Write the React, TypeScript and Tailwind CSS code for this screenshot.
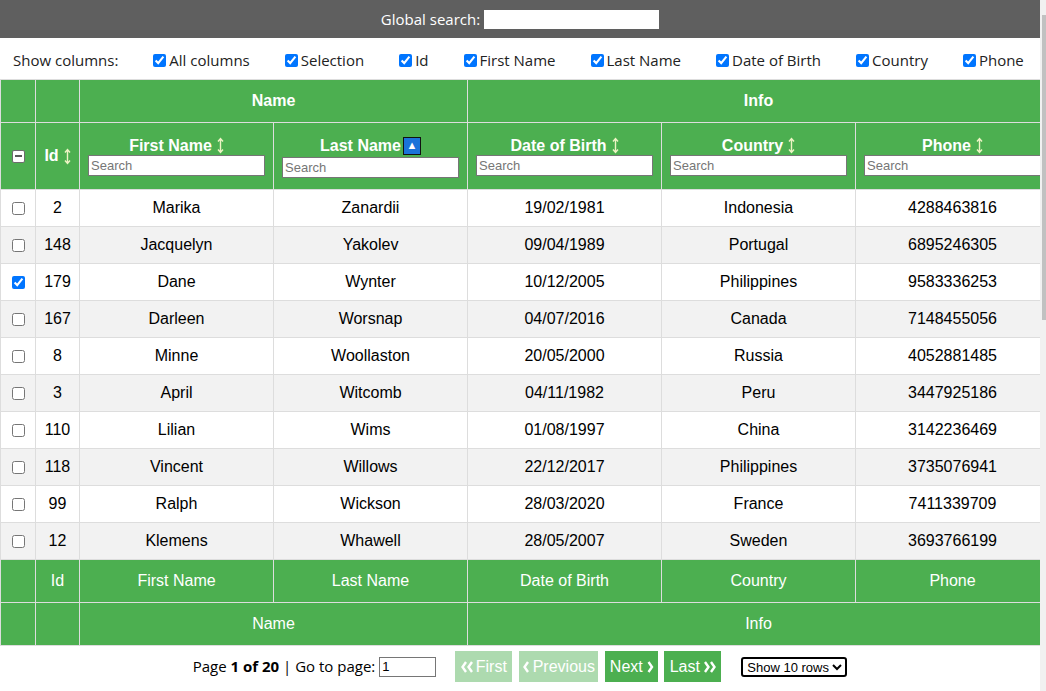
import { useState } from "react";

interface Person { id: number; first: string; last: string; dob: string; country: string; phone: string; }

const people: Person[] = [
  { id: 2, first: "Marika", last: "Zanardii", dob: "19/02/1981", country: "Indonesia", phone: "4288463816" },
  { id: 148, first: "Jacquelyn", last: "Yakolev", dob: "09/04/1989", country: "Portugal", phone: "6895246305" },
  { id: 179, first: "Dane", last: "Wynter", dob: "10/12/2005", country: "Philippines", phone: "9583336253" },
  { id: 167, first: "Darleen", last: "Worsnap", dob: "04/07/2016", country: "Canada", phone: "7148455056" },
  { id: 8, first: "Minne", last: "Woollaston", dob: "20/05/2000", country: "Russia", phone: "4052881485" },
  { id: 3, first: "April", last: "Witcomb", dob: "04/11/1982", country: "Peru", phone: "3447925186" },
  { id: 110, first: "Lilian", last: "Wims", dob: "01/08/1997", country: "China", phone: "3142236469" },
  { id: 118, first: "Vincent", last: "Willows", dob: "22/12/2017", country: "Philippines", phone: "3735076941" },
  { id: 99, first: "Ralph", last: "Wickson", dob: "28/03/2020", country: "France", phone: "7411339709" },
  { id: 12, first: "Klemens", last: "Whawell", dob: "28/05/2007", country: "Sweden", phone: "3693766199" },
];

const columns = ["All columns", "Selection", "Id", "First Name", "Last Name", "Date of Birth", "Country", "Phone"];

const cell = "border border-[#dddddd] text-center";

function Chevrons({ dir }: { dir: "left" | "right" }) {
  const d = dir === "left" ? "M5 1 L1.5 6 L5 11 M11 1 L7.5 6 L11 11" : "M1 1 L4.5 6 L1 11 M7 1 L10.5 6 L7 11";
  return (
    <svg width="12" height="12" viewBox="0 0 12 12" className="shrink-0">
      <path d={d} fill="none" stroke="white" strokeWidth={2.4} />
    </svg>
  );
}

function Chevron({ dir }: { dir: "left" | "right" }) {
  const d = dir === "left" ? "M5 1 L1.5 6 L5 11" : "M1.5 1 L5 6 L1.5 11";
  return (
    <svg width="7" height="12" viewBox="0 0 7 12" className="shrink-0">
      <path d={d} fill="none" stroke="white" strokeWidth={2.4} />
    </svg>
  );
}

// flèche de tri ↕ (dessinée, le glyphe de la police est trop petit)
function SortArrow() {
  return (
    <svg width="7" height="17" viewBox="0 0 7 17" className="ml-[5px] shrink-0">
      <path d="M3.5 1.5 V15.5 M1 4.5 L3.5 1.5 L6 4.5 M1 12.5 L3.5 15.5 L6 12.5" fill="none" stroke="#eef4c4" strokeWidth={1.4} />
    </svg>
  );
}

function HeadCol({ title, sorted }: { title: string; sorted?: boolean }) {
  return (
    <th className={`${cell} px-[8px] align-middle`}>
      <div className="flex flex-col items-stretch">
        <div className={`flex items-center justify-center font-bold text-white ${sorted ? "h-[22px]" : "h-[19px]"}`}>
          <span>{title}</span>
          {sorted ? (
            <span className="ml-[2px] flex h-[18px] w-[18px] items-center justify-center border-[1.5px] border-[#111] bg-[#1a73d9] text-[11px] leading-none text-white">▲</span>
          ) : (
            <SortArrow />
          )}
        </div>
        <input
          placeholder="Search"
          className="h-[21px] w-full border border-[#767676] bg-white px-[2px] text-[13px] font-normal text-black placeholder:text-[#767676]"
        />
      </div>
    </th>
  );
}

export default function App() {
  const [checked] = useState<number[]>([179]);
  return (
    <div className="flex h-[691px] w-[1046px] overflow-hidden bg-white">
      <div className="w-[1040px] shrink-0 overflow-hidden">
        <div className="flex h-[38px] items-center justify-center gap-[4px] bg-[#5f5f5f] font-['Open_Sans',sans-serif] text-[15px] text-white">
          <span>Global search:</span>
          <input className="h-[19px] w-[175px] bg-white text-black" />
        </div>
        <div className="flex h-[41px] items-center gap-[35px] pl-[13px] pt-[3px] font-['Open_Sans',sans-serif] text-[15px] text-[#222]">
          <span>Show columns:</span>
          {columns.map((c) => (
            <label key={c} className="flex items-center gap-[3px]">
              <input type="checkbox" defaultChecked className="h-[13px] w-[13px]" />
              <span>{c}</span>
            </label>
          ))}
        </div>
        <table className="w-[1049px] table-fixed border-collapse font-['Liberation_Sans',Arial,sans-serif] text-[16px]">
          <colgroup>
            <col className="w-[35px]" />
            <col className="w-[44px]" />
            <col className="w-[194px]" />
            <col className="w-[194px]" />
            <col className="w-[194px]" />
            <col className="w-[194px]" />
            <col className="w-[194px]" />
          </colgroup>
          <thead className="bg-[#4CAF50] text-white">
            <tr className="h-[43px]">
              <th className={cell}></th>
              <th className={cell}></th>
              <th colSpan={2} className={`${cell} font-bold`}>Name</th>
              <th colSpan={3} className={`${cell} font-bold`}>Info</th>
            </tr>
            <tr className="h-[67px]">
              <th className={cell}>
                <div className="mx-auto flex h-[13px] w-[13px] items-center justify-center rounded-[2px] border border-[#6d6d6d] bg-white">
                  <div className="h-[2px] w-[7px] bg-[#5a5a5a]" />
                </div>
              </th>
              <th className={`${cell} font-bold`}>
                <div className="flex items-center justify-center">
                  <span>Id</span>
                  <SortArrow />
                </div>
              </th>
              <HeadCol title="First Name" />
              <HeadCol title="Last Name" sorted />
              <HeadCol title="Date of Birth" />
              <HeadCol title="Country" />
              <HeadCol title="Phone" />
            </tr>
          </thead>
          <tbody className="text-black">
            {people.map((p, i) => (
              <tr key={p.id} className={`h-[37px] ${i % 2 === 1 ? "bg-[#f2f2f2]" : "bg-white"}`}>
                <td className={cell}>
                  <input type="checkbox" defaultChecked={checked.includes(p.id)} className="h-[13px] w-[13px] align-middle" />
                </td>
                <td className={cell}>{p.id}</td>
                <td className={cell}>{p.first}</td>
                <td className={cell}>{p.last}</td>
                <td className={cell}>{p.dob}</td>
                <td className={cell}>{p.country}</td>
                <td className={cell}>{p.phone}</td>
              </tr>
            ))}
          </tbody>
          <tfoot className="bg-[#4CAF50] text-white">
            <tr className="h-[43px]">
              <td className={cell}></td>
              <td className={cell}>Id</td>
              <td className={cell}>First Name</td>
              <td className={cell}>Last Name</td>
              <td className={cell}>Date of Birth</td>
              <td className={cell}>Country</td>
              <td className={cell}>Phone</td>
            </tr>
            <tr className="h-[43px]">
              <td className={cell}></td>
              <td className={cell}></td>
              <td colSpan={2} className={cell}>Name</td>
              <td colSpan={3} className={cell}>Info</td>
            </tr>
          </tfoot>
        </table>
        <div className="flex h-[46px] items-center justify-center pb-[5px]">
          <span className="font-['Open_Sans',sans-serif] text-[15px] text-black">
            Page <b>1 of 20</b> | Go to page:
          </span>
          <input defaultValue="1" className="ml-[4px] h-[20px] w-[57px] border border-[#767676] px-[2px] font-['Liberation_Sans',Arial,sans-serif] text-[13px]" />
          <div className="ml-[19px] flex gap-[7px] font-['Liberation_Sans',Arial,sans-serif] text-[16px] text-white">
            <button className="flex h-[31px] w-[57px] items-center justify-center gap-[3px] bg-[#4CAF50] opacity-45">
              <Chevrons dir="left" />First
            </button>
            <button className="flex h-[31px] w-[79px] items-center justify-center gap-[3px] bg-[#4CAF50] opacity-45">
              <Chevron dir="left" />Previous
            </button>
            <button className="flex h-[31px] w-[53px] items-center justify-center gap-[4px] bg-[#4CAF50]">
              Next<Chevron dir="right" />
            </button>
            <button className="-ml-[1px] flex h-[31px] w-[57px] items-center justify-center gap-[4px] bg-[#4CAF50]">
              Last<Chevrons dir="right" />
            </button>
          </div>
          <select className="ml-[20px] h-[20px] w-[106px] rounded-[3px] border-2 border-black font-['Liberation_Sans',Arial,sans-serif] text-[13px] text-black">
            <option>Show 10 rows</option>
          </select>
        </div>
      </div>
      <div className="flex w-[6px] shrink-0 flex-col bg-[#f1f1f1] pt-[15px]">
        <div className="ml-[2px] h-[305px] w-[4px] bg-[#c1c1c1]" />
      </div>
    </div>
  );
}
